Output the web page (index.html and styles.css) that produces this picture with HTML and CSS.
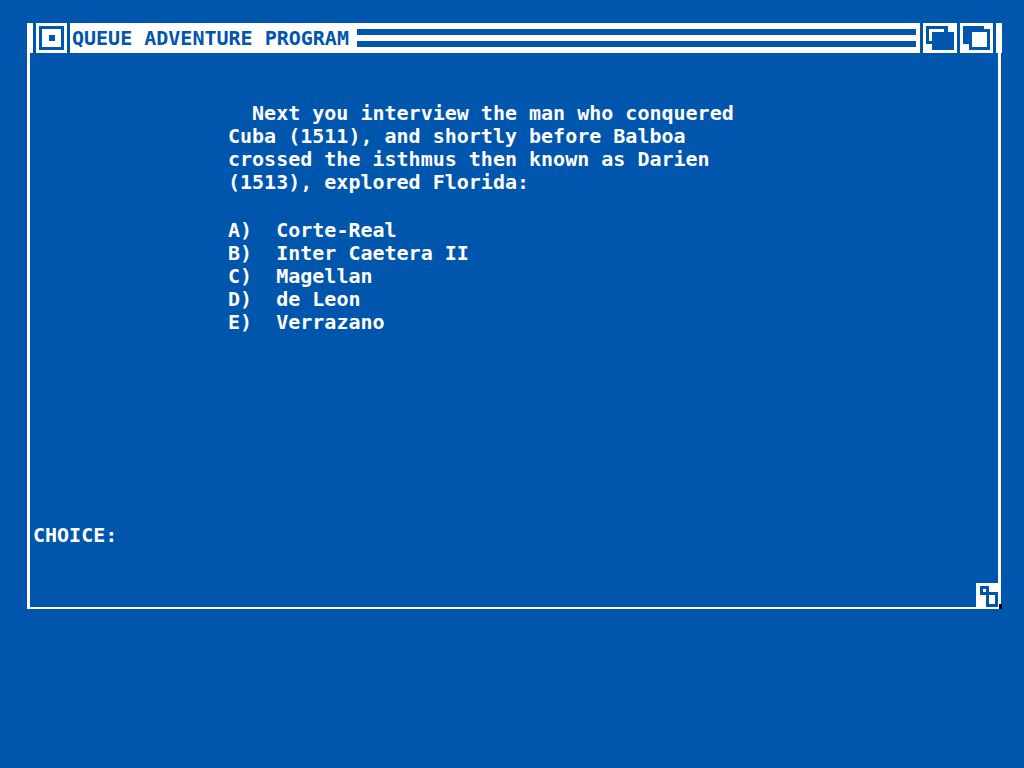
FILE: index.html
```html
<!DOCTYPE html>
<html lang="en">
<head>
    <meta charset="UTF-8">
    <meta name="viewport" content="width=device-width, initial-scale=1.0">
    <title>Queue Adventure Program</title>
    <link rel="stylesheet" href="styles.css">
</head>
<body>

<main class="window">
    <!-- Title bar -->
    <header class="title-bar">
        <span class="bar-end"></span>
        <button type="button" class="gadget" aria-label="Close">
            <svg width="31" height="30" viewBox="0 0 31 30" shape-rendering="crispEdges">
                <path class="ink" fill-rule="evenodd" d="M3 3h25v24H3zM6 6v18h19V6z"/>
                <rect class="ink" x="13" y="12" width="6" height="6"/>
            </svg>
        </button>
        <div class="drag-bar">
            <h1>QUEUE ADVENTURE PROGRAM</h1>
            <span class="stripes"></span>
        </div>
        <button type="button" class="gadget" aria-label="Send to back">
            <svg width="34" height="30" viewBox="0 0 34 30" shape-rendering="crispEdges">
                <rect class="ink" x="3" y="3" width="22" height="18"/>
                <rect class="paper" x="6" y="6" width="15" height="12"/>
                <rect class="ink" x="9" y="9" width="22" height="18"/>
            </svg>
        </button>
        <button type="button" class="gadget" aria-label="Bring to front">
            <svg width="33" height="30" viewBox="0 0 33 30" shape-rendering="crispEdges">
                <rect class="ink" x="3" y="3" width="21" height="18"/>
                <rect class="ink" x="9" y="6" width="21" height="21"/>
                <rect class="paper" x="12" y="9" width="15" height="15"/>
            </svg>
        </button>
        <span class="bar-end"></span>
    </header>

    <!-- Question and answers -->
    <div class="screen">
        <section class="question">
            <p>Next you interview the man who conquered Cuba (1511), and shortly before Balboa crossed the isthmus then known as Darien (1513), explored Florida:</p>
            <ul class="answers">
                <li><span>A)</span><span>Corte-Real</span></li>
                <li><span>B)</span><span>Inter Caetera II</span></li>
                <li><span>C)</span><span>Magellan</span></li>
                <li><span>D)</span><span>de Leon</span></li>
                <li><span>E)</span><span>Verrazano</span></li>
            </ul>
        </section>

        <form class="prompt">
            <label for="choice">CHOICE:</label>
            <input type="text" id="choice" maxlength="1" autocomplete="off">
        </form>

        <button type="button" class="resize" aria-label="Resize">
            <svg width="26" height="26" viewBox="0 0 26 26" shape-rendering="crispEdges">
                <rect class="paper" width="25" height="26"/>
                <path class="ink" fill-rule="evenodd" d="M4 3h9v9H4zM7 6v3h3V6z"/>
                <path class="ink" fill-rule="evenodd" d="M10 9h12v15H10zM13 12v9h6v-9z"/>
                <rect class="corner" x="23" y="21" width="3" height="5"/>
            </svg>
        </button>
    </div>
</main>

</body>
</html>
```

FILE: styles.css
```css
:root {
    --blue: #0055ad;
    --white: #ffffff;
}

* {
    box-sizing: border-box;
}

body {
    display: flex;
    min-height: 100vh;
    margin: 0;
    padding: 23px 22px 159px 27px;
    background-color: var(--blue);
    color: var(--white);
    font: bold 20px/23px "DejaVu Sans Mono", "Liberation Mono", monospace;
}

.window {
    display: flex;
    flex: 1;
    flex-direction: column;
}

.ink {
    fill: var(--blue);
}

.paper {
    fill: var(--white);
}

.corner {
    fill: #000000;
}

svg {
    display: block;
}

/* Title bar */
.title-bar {
    display: flex;
    gap: 3px;
    height: 30px;
}

.bar-end {
    width: 6px;
    background-color: var(--white);
}

.gadget {
    padding: 0;
    border: none;
    background-color: var(--white);
    cursor: pointer;
}

.drag-bar {
    display: flex;
    flex: 1;
    align-items: center;
    gap: 8px;
    padding: 0 4px 0 2px;
    background-color: var(--white);
    color: var(--blue);
}

.drag-bar h1 {
    margin: 0;
    font-size: 20px;
    white-space: nowrap;
}

.stripes {
    flex: 1;
    height: 18px;
    border: solid var(--blue);
    border-width: 6px 0;
}

/* Window contents */
.screen {
    position: relative;
    display: flex;
    flex: 1;
    flex-direction: column;
    justify-content: space-between;
    margin-right: 1px;
    padding: 49px 0 60px;
    border: solid var(--white);
    border-width: 0 3px 2px;
}

.question {
    padding-left: 198px;
}

.question p {
    max-width: 43ch;
    margin: 0 0 25px;
    text-indent: 2ch;
}

.answers {
    margin: 0;
    padding: 0;
    list-style: none;
}

.answers li {
    display: flex;
    gap: 2ch;
}

.prompt {
    display: flex;
    padding-left: 3px;
}

.prompt input {
    flex: 1;
    min-width: 0;
    padding: 0 8px;
    border: none;
    outline: none;
    background: transparent;
    color: inherit;
    font: inherit;
}

.resize {
    position: absolute;
    right: -4px;
    bottom: -2px;
    padding: 0;
    border: none;
    background: none;
    cursor: nwse-resize;
}
```
